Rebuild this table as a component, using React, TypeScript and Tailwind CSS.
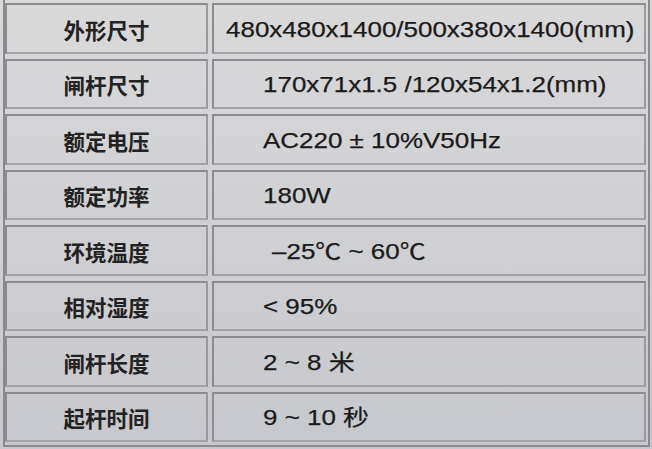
import React from "react";

const rows: { label: string; value: string; pad: string }[] = [
  { label: "外形尺寸", value: "480x480x1400/500x380x1400(mm)", pad: "pl-[12px]" },
  { label: "闸杆尺寸", value: "170x71x1.5 /120x54x1.2(mm)", pad: "pl-[49px]" },
  { label: "额定电压", value: "AC220 ± 10%V50Hz", pad: "pl-[49px]" },
  { label: "额定功率", value: "180W", pad: "pl-[49px]" },
  { label: "环境温度", value: "–25℃ ~ 60℃", pad: "pl-[58px]" },
  { label: "相对湿度", value: "< 95%", pad: "pl-[49px]" },
  { label: "闸杆长度", value: "2 ~ 8 米", pad: "pl-[49px]" },
  { label: "起杆时间", value: "9 ~ 10 秒", pad: "pl-[49px]" },
];

export default function App() {
  return (
    <div className="w-[652px] h-[449px] overflow-hidden bg-gradient-to-b from-[#d9d9da] to-[#c7c8cd] pl-[3px] pr-[2px] pb-[2px]">
      <div className="h-full border-2 border-t-0 border-[#8a8a8e] pt-[3px] pb-[3px] pr-[2px] grid grid-rows-8 gap-y-[5px]">
        {rows.map((r) => (
          <div key={r.label} className="grid grid-cols-[203px_1fr] gap-x-[4px] min-h-0">
            <div className="border-2 border-[#8c8c90] border-b-[#a3a3a7] border-r-[#9a9a9e] flex items-center justify-center pt-[2px]">
              <span
                className="text-[21.5px] leading-none font-semibold text-[#222]"
                style={{ fontFamily: '"Noto Sans CJK SC", sans-serif' }}
              >
                {r.label}
              </span>
            </div>
            <div className={`border-2 border-[#8c8c90] border-b-[#a3a3a7] border-r-[#9a9a9e] flex items-center pt-[3px] ${r.pad}`}>
              <span
                className="inline-block origin-left scale-x-[1.18] text-[22px] leading-none text-[#1a1a1a] whitespace-pre [-webkit-text-stroke:0.25px_#1a1a1a]"
                style={{ fontFamily: '"Liberation Sans", "Noto Sans CJK SC", sans-serif' }}
              >
                {r.value}
              </span>
            </div>
          </div>
        ))}
      </div>
    </div>
  );
}
